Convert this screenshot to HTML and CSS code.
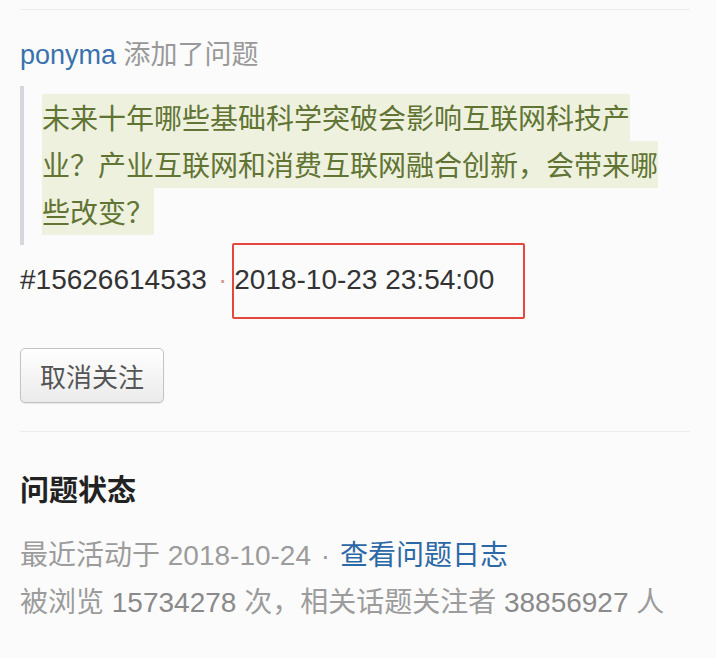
FILE: index.html
```html
<!DOCTYPE html>
<html>
<head>
    <link rel="stylesheet" href="styles.css">
</head>
<body>
    <div class="page">
        <div class="rule"></div>

        <div class="activity">
            <a class="user" href="#">ponyma</a> 添加了问题
        </div>

        <blockquote class="question">
            <span class="mark">未来十年哪些基础科学突破会影响互联网科技产业？产业互联网和消费互联网融合创新，会带来哪些改变？</span>
        </blockquote>

        <div class="meta">
            <span class="log-id">#15626614533</span><span class="sep">·</span><span class="date">2018-10-23 23:54:00</span>
        </div>

        <button class="follow-btn">取消关注</button>

        <div class="rule rule-mid"></div>

        <h2 class="status-title">问题状态</h2>

        <div class="status">
            <div class="status-line">
                最近活动于 2018-10-24 <span class="dot">·</span> <a class="log-link" href="#">查看问题日志</a>
            </div>
            <div class="status-line">
                被浏览 <span class="num">15734278</span> 次，相关话题关注者 <span class="num">38856927</span> 人
            </div>
        </div>
    </div>
</body>
</html>
```

FILE: styles.css
```css
body {
    margin: 0;
    background-color: #fbfbfb;
    font-family: "Liberation Sans", "Noto Sans CJK SC", sans-serif;
    color: #333;
}

.page {
    padding: 9px 20px 0 20px;
}

.rule {
    border-top: 1px solid #ececec;
    margin-right: 6px;
}

.activity {
    margin-top: 25px;
    font-size: 27px;
    line-height: 40px;
    color: #999;
}

.user {
    color: #3a72ae;
    text-decoration: none;
}

.question {
    margin: 11px 0 0 0;
    padding: 8px 30px 10px 18px;
    border-left: 4px solid #d6d6dc;
    font-family: "Noto Sans CJK SC", sans-serif;
    font-size: 28px;
    line-height: 47px;
    color: #617434;
}

.mark {
    background-color: #eef1de;
    padding: 3px 0 4px 0;
}

.meta {
    margin-top: 15px;
    font-size: 28px;
    line-height: 40px;
    color: #333;
}

.sep {
    margin: 0 7px 0 11px;
    color: #d29a92;
}

.date {
    position: relative;
}

.date::after {
    content: "";
    position: absolute;
    left: -2px;
    top: -21px;
    width: 289px;
    height: 72px;
    border: 2px solid #e3473d;
    border-radius: 2px;
}

.follow-btn {
    display: block;
    margin-top: 48px;
    width: 144px;
    height: 55px;
    padding: 0;
    font-family: "Noto Sans CJK SC", sans-serif;
    font-size: 26px;
    color: #555;
    background: linear-gradient(#ffffff, #ebebeb);
    border: 1px solid #c3c3c3;
    border-radius: 5px;
    box-shadow: 0 1px 1px rgba(0, 0, 0, 0.08);
    cursor: pointer;
}

.rule-mid {
    margin-top: 28px;
}

.status-title {
    margin: 36px 0 0 0;
    font-family: "Noto Sans CJK SC", sans-serif;
    font-size: 29px;
    font-weight: bold;
    line-height: 40px;
    color: #222;
}

.status {
    margin-top: 24px;
    font-size: 28px;
    line-height: 47px;
    color: #9c9c9c;
}

.dot {
    margin: 0 2px;
}

.log-link {
    color: #2c68a6;
    text-decoration: none;
}

.num {
    color: #8a8a8a;
}
```
